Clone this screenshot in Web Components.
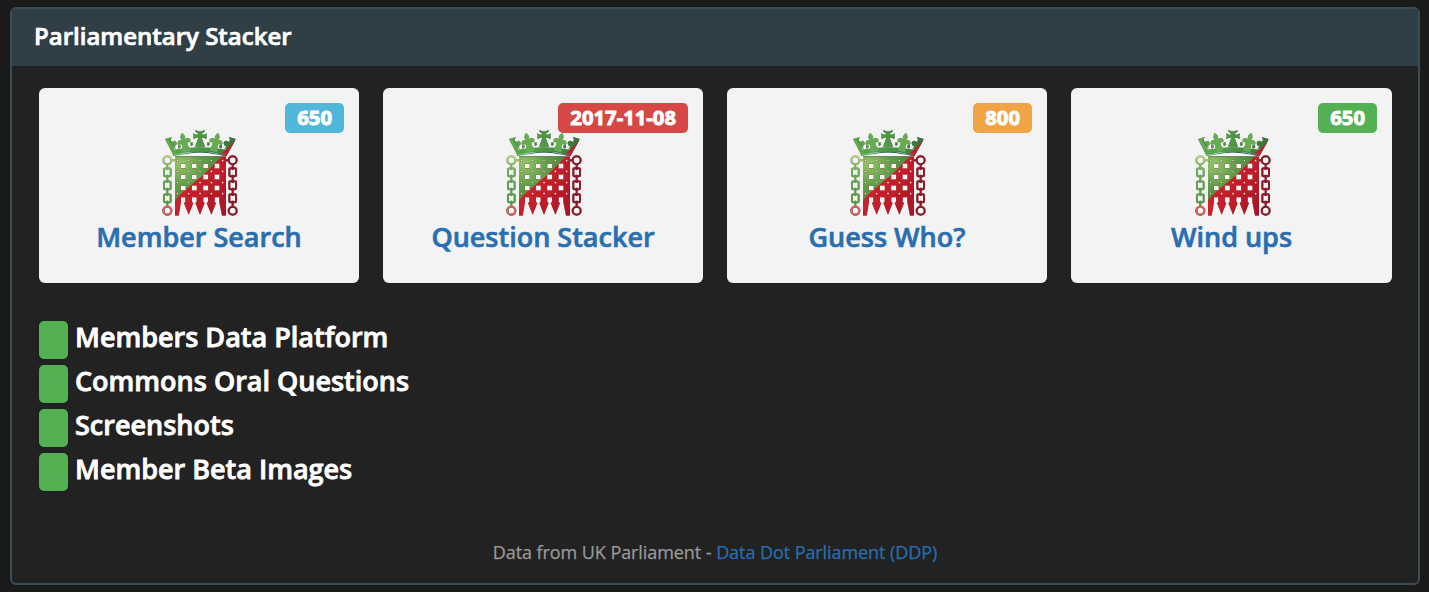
<!DOCTYPE html>
<html lang="en">
<head>
<meta charset="utf-8">
<title>Parliamentary Stacker</title>
<style>
html,body{margin:0;background:#1a1a1a}
body{font-family:"Open Sans","Noto Sans",sans-serif;color:#fff;height:592px;overflow:hidden;box-sizing:border-box;padding:7px 9px 7px 10px}
</style>
</head>
<body>
<stacker-panel>
  <span slot="title">Parliamentary Stacker</span>
  <stack-card slot="cards" style="--badge:#50b7da" badge="650">Member Search</stack-card>
  <stack-card slot="cards" style="--badge:#d64845" badge="2017-11-08">Question Stacker</stack-card>
  <stack-card slot="cards" style="--badge:#f0a445" badge="800">Guess Who?</stack-card>
  <stack-card slot="cards" style="--badge:#53b053" badge="650">Wind ups</stack-card>
  <status-row slot="status">Members Data Platform</status-row>
  <status-row slot="status">Commons Oral Questions</status-row>
  <status-row slot="status">Screenshots</status-row>
  <status-row slot="status">Member Beta Images</status-row>
  <data-credit slot="footer">Data from UK Parliament - <a href="#">Data Dot Parliament (DDP)</a></data-credit>
</stacker-panel>
<script>
const define = (name, html, setup) => customElements.define(name, class extends HTMLElement {
  constructor() { super(); this.attachShadow({ mode: 'open' }).innerHTML = html; }
  connectedCallback() { if (setup) setup(this, this.shadowRoot); }
});

/* Crowned portcullis, split green and red along its diagonal */
const grille = [138, 171, 204].map(y => [100, 133, 167, 201].map(x => `M${x-7.5} ${y-7.5}v15h15v-15z`).join('')).join('');
const studs = [122, 154, 188, 221].map(y => [82, 116, 150, 184, 218].map(x => `M${x-2.5} ${y-2.5}v5h5v-5z`).join('')).join('');
const chain = x => `<circle cx="${x}" cy="121" r="12"/><circle cx="${x}" cy="272" r="12"/>` +
  [145, 184, 223].map(y => `<rect x="${x-10}" y="${y}" width="20" height="24" rx="3"/>`).join('') +
  `<path d="M${x} 134v16M${x} 164v25M${x} 203v25M${x} 242v17"/>`;
const fleur = `<path d="M0 -27C-8 -19 -9 -12 -4 -4C-8 -10 -19 -9 -20 0C-20 7 -13 8 -11 3C-7 9 -8 14 -11 20V30H11V20C8 14 7 9 11 3C13 8 20 7 20 0C19 -9 8 -10 4 -4C9 -12 8 -19 0 -27Z"/>`;
define('portcullis-mark', `
<style>:host{display:block;width:100px;height:105px}svg{display:block;filter:drop-shadow(.4px .5px .5px #0008)}</style>
<svg width="100" height="105" viewBox="0 0 300 315">
  <defs>
    <radialGradient id="g" gradientUnits="userSpaceOnUse" cx="92" cy="130" r="170"><stop offset="0" stop-color="#91c567"/><stop offset=".4" stop-color="#5e9e49"/><stop offset="1" stop-color="#357e36"/></radialGradient>
    <linearGradient id="k" gradientUnits="userSpaceOnUse" x1="45" y1="0" x2="257" y2="0"><stop stop-color="#65ad50"/><stop offset=".5" stop-color="#4d9744"/><stop offset="1" stop-color="#36733a"/></linearGradient>
    <linearGradient id="r" gradientUnits="userSpaceOnUse" x1="110" y1="180" x2="235" y2="270"><stop stop-color="#d0232c"/><stop offset="1" stop-color="#a81424"/></linearGradient>
    <linearGradient id="b" gradientUnits="userSpaceOnUse" x1="68" y1="0" x2="230" y2="0"><stop stop-color="#66dba2"/><stop offset=".3" stop-color="#3f836c"/><stop offset=".7" stop-color="#285d55"/><stop offset=".87" stop-color="#438896"/><stop offset="1" stop-color="#b5469b"/></linearGradient>
    <linearGradient id="c" gradientUnits="userSpaceOnUse" x1="0" y1="108" x2="0" y2="285"><stop stop-color="#b2d675"/><stop offset=".25" stop-color="#6aa958"/><stop offset="1" stop-color="#4d943f"/></linearGradient>
    <clipPath id="body"><path clip-rule="evenodd" d="M75 109H228V287H216L208 246V232H194V246L198 249L184 284L170 249L174 246V232H160V246L164 249L150 284L136 249L140 246V232H126V246L130 249L116 284L102 249L106 246V232H93V246L86 287H75Z${grille}${studs}"/></clipPath>
  </defs>
  <g clip-path="url(#body)"><rect x="70" y="105" width="165" height="185" fill="url(#r)"/><path d="M75 108H216L166 159C145 180 99 210 75 241Z" fill="url(#g)"/></g>
  <g fill="url(#k)">
    <path d="M45 57L66 51Q59 61 66 67Q72 58 78 65Q83 72 76 78Q71 78 68 74L74 89Q150 74 226 89L232 74Q229 79 224 77Q218 70 224 64Q230 59 236 66Q243 60 236 51L257 57L229 108H215Q150 87 86 108H71Z"/>
    <path d="M134 31Q150 36 166 31Q163 38 154 43Q162 47 171 40Q167 49 171 57Q162 53 155 53L165 80H135L145 53Q138 53 129 57Q133 49 129 40Q138 47 146 43Q137 38 134 31Z"/>
    <g transform="translate(102 65) rotate(-15)">${fleur}</g><g transform="translate(198 65) rotate(15)">${fleur}</g>
    <circle cx="88" cy="79" r="4"/><circle cx="125" cy="71" r="4"/><circle cx="175" cy="71" r="4"/><circle cx="212" cy="79" r="4"/>
  </g>
  <g stroke="#225c32" stroke-width="2.5" fill="none" opacity=".75"><path d="M67 71L76 85M84 83Q88 87 92 81M121 75Q126 79 129 73M171 75Q176 79 179 73M208 83Q213 87 217 81M224 86L233 75M58 58Q63 69 67 69"/></g>
  <path d="M257 59L229 109L210 105Q232 88 257 59Z" fill="#bc2532"/>
  <path d="M76 109Q88 96 150 96Q206 96 219 109Z" fill="#f5f5f5"/>
  <path d="M73 104Q84 107 100 102Q150 91 200 102Q214 107 226 103" fill="none" stroke="url(#b)" stroke-width="3"/>
  <path d="M78 110H217" stroke="#52754d" stroke-width="2"/>
  <g fill="none" stroke="url(#c)" stroke-width="5.5">${chain(52)}<path d="M64 121H76"/></g>
  <circle cx="52" cy="272" r="12" fill="none" stroke="#e65962" stroke-width="6"/>
  <g fill="none" stroke="#8e1828" stroke-width="6">${chain(248)}<path d="M226 121H237"/></g>
</svg>`);

define('stack-card', `
<style>
:host{display:flex;flex-direction:column;align-items:center;position:relative;height:195px;box-sizing:border-box;padding-top:32px;background:#f3f3f3;border-radius:6px}
portcullis-mark{margin-left:2px}
.badge{position:absolute;right:15px;top:15px;height:30px;line-height:29px;padding:0 12px;border-radius:5px;background:var(--badge);font-size:20.25px;font-weight:700;-webkit-text-stroke:.9px;white-space:nowrap}
a{color:#286eb1;font-size:27px;font-weight:600;-webkit-text-stroke:.6px;line-height:38px;margin-top:-7px;white-space:nowrap}
</style>
<portcullis-mark></portcullis-mark><span class="badge"></span><a><slot></slot></a>`,
(el, root) => { root.querySelector('.badge').textContent = el.getAttribute('badge'); });

define('status-row', `
<style>
:host{display:flex;gap:7px;height:38px;font-size:27px;font-weight:600;-webkit-text-stroke:.8px;line-height:32px;white-space:nowrap}
i{width:29px;height:38px;border-radius:5px;background:#53b053}
</style><i></i><span><slot></slot></span>`);

define('data-credit', `
<style>:host{display:block;text-align:center;font-size:18px;line-height:24px;letter-spacing:-.07px;-webkit-text-stroke:.25px;color:#999}::slotted(a){color:#286eb1;text-decoration:none}</style><slot></slot>`);

define('stacker-panel', `
<style>
:host{display:flex;flex-direction:column;height:578px;box-sizing:border-box;border:2px solid #3b4c57;border-radius:6px;background:#222;overflow:hidden}
header{height:57px;flex:none;background:#303e46;padding-left:22px;font-size:24px;font-weight:600;-webkit-text-stroke:.7px;line-height:54px}
.cards{display:grid;grid-template-columns:320px 320px 320px 1fr;gap:24px;padding:22px 26px 0 27px}
.status{display:flex;flex-direction:column;gap:6px;padding:38px 27px 0}
footer{padding-top:49px}
</style>
<header><slot name="title"></slot></header>
<div class="cards"><slot name="cards"></slot></div>
<div class="status"><slot name="status"></slot></div>
<footer><slot name="footer"></slot></footer>`);
</script>
</body>
</html>
